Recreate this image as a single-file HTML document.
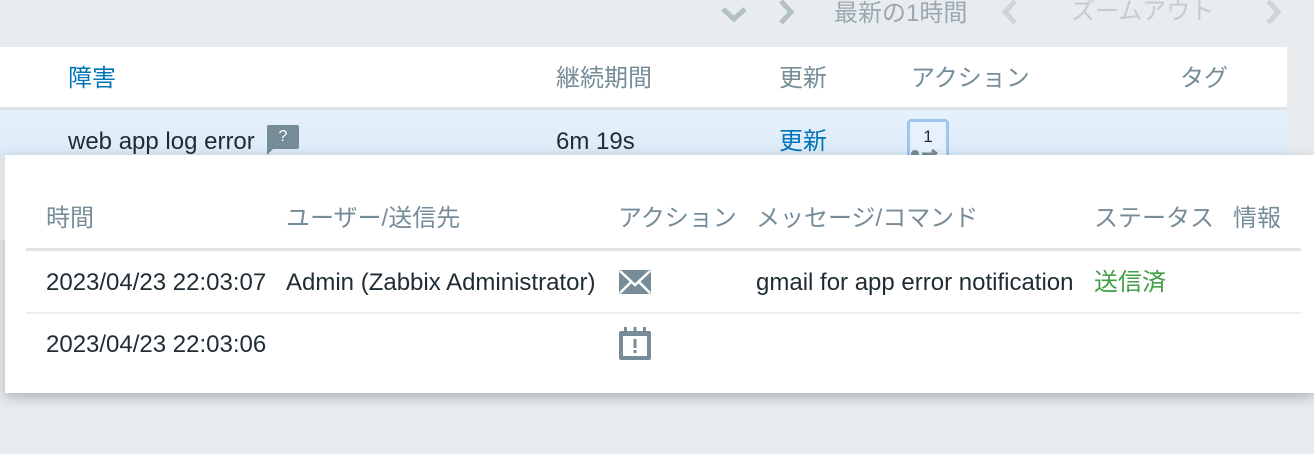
<!DOCTYPE html>
<html><head><meta charset="utf-8"><style>
*{margin:0;padding:0;box-sizing:border-box}
body{width:1314px;height:454px;overflow:hidden;background:#e8ecef;font-family:"Liberation Sans","Noto Sans CJK JP",sans-serif;font-size:24px;line-height:28px;position:relative}
.a{position:absolute;white-space:nowrap}
.g{color:#768d99}.b{color:#0275b8}.d{color:#1f2c33}
</style></head><body>
<div class="a" style="left:718px;top:0;width:600px;height:30px;color:#aab8c1">
 <svg class="a" style="left:2px;top:4px" width="28" height="20"><path d="M3 5l11 10 11-10" stroke="#b3c0c8" stroke-width="5" fill="none"/></svg>
 <svg class="a" style="left:58px;top:-2px" width="20" height="30"><path d="M5 3l10 11-10 11" stroke="#b3c0c8" stroke-width="5" fill="none"/></svg>
 <span class="a" style="left:116px;top:0px;color:#9aa8b1">最新の1時間</span>
 <svg class="a" style="left:282px;top:-2px" width="20" height="30"><path d="M15 3L5 14l10 11" stroke="#ccd5db" stroke-width="5" fill="none"/></svg>
 <span class="a" style="left:353px;top:-2px;color:#c3ccd2">ズームアウト</span>
 <svg class="a" style="left:545px;top:-2px" width="20" height="30"><path d="M5 3l10 11-10 11" stroke="#ccd5db" stroke-width="5" fill="none"/></svg>
</div>
<div class="a" style="left:0;top:47px;width:1287px;height:61px;background:#fff"></div>
<div class="a" style="left:0;top:107px;width:1287px;height:3px;background:#dfe4e7"></div>
<div class="a" style="left:0;top:110px;width:1287px;height:46px;background:linear-gradient(#e6f1fb,#dcebf8)"></div>
<span class="a b" style="left:68px;top:65px">障害</span>
<span class="a g" style="left:556px;top:65px">継続期間</span>
<span class="a g" style="left:779px;top:65px">更新</span>
<span class="a g" style="left:911px;top:65px">アクション</span>
<span class="a g" style="left:1180px;top:65px">タグ</span>
<span class="a d" style="left:68px;top:128px">web app log error</span>
<div class="a" style="left:267px;top:125px;width:32px;height:24px;background:#768d99;border-radius:2px;color:#fff;font-size:16px;text-align:center;line-height:24px">?</div>
<div class="a" style="left:267px;top:148px;width:0;height:0;border-top:7px solid #768d99;border-right:7px solid transparent"></div>
<span class="a d" style="left:556px;top:128px">6m 19s</span>
<span class="a b" style="left:779px;top:128px">更新</span>
<div class="a" style="left:907px;top:119px;width:42px;height:40px;border:3px solid #9ac6ef;border-radius:4px;background:#e6f1fb;font-size:17px;text-align:center;line-height:30px;color:#1f2c33">1</div>
<svg class="a" style="left:910px;top:146px" width="36" height="10"><circle cx="5" cy="8" r="4" fill="#768d99"/><path d="M12 8h14M22 4l5 4" stroke="#768d99" stroke-width="3" fill="none"/></svg>
<div class="a" style="left:5px;top:155px;width:1309px;height:238px;background:#fff;box-shadow:0 4px 12px rgba(0,0,0,.25)"></div>
<div class="a" style="left:0;top:155px;width:5px;height:85px;background:#dde3e7"></div>
<span class="a g" style="left:46px;top:205px">時間</span>
<span class="a g" style="left:286px;top:205px">ユーザー/送信先</span>
<span class="a g" style="left:618px;top:205px">アクション</span>
<span class="a g" style="left:756px;top:205px">メッセージ/コマンド</span>
<span class="a g" style="left:1094px;top:205px">ステータス</span>
<span class="a g" style="left:1233px;top:205px">情報</span>
<div class="a" style="left:26px;top:248px;width:1275px;height:3px;background:#dfe4e7"></div>
<span class="a d" style="left:46px;top:269px">2023/04/23 22:03:07</span>
<span class="a d" style="left:286px;top:269px">Admin (Zabbix Administrator)</span>
<svg class="a" style="left:619px;top:270px" width="32" height="24"><rect width="32" height="24" rx="2" fill="#768d99"/><path d="M1 1l15 14L31 1M1 23l11-11M31 23L20 12" stroke="#fff" stroke-width="2.5" fill="none"/></svg>
<span class="a d" style="left:756px;top:269px">gmail for app error notification</span>
<span class="a" style="left:1094px;top:269px;color:#429e47">送信済</span>
<div class="a" style="left:26px;top:312px;width:1275px;height:2px;background:#ebeef0"></div>
<span class="a d" style="left:46px;top:331px">2023/04/23 22:03:06</span>
<svg class="a" style="left:619px;top:327px" width="32" height="33"><rect x="0" y="4" width="32" height="29" rx="2" fill="#768d99"/><rect x="4" y="9" width="24" height="20" fill="#fff"/><rect x="5" y="0" width="3" height="6" fill="#768d99"/><rect x="14.5" y="0" width="3" height="6" fill="#768d99"/><rect x="24" y="0" width="3" height="6" fill="#768d99"/><rect x="14.5" y="12" width="3" height="9" fill="#768d99"/><rect x="14.5" y="23" width="3" height="3" fill="#768d99"/></svg>
</body></html>
